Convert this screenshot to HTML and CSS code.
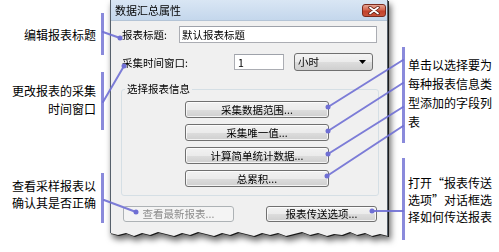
FILE: index.html
```html
<!DOCTYPE html>
<html lang="zh-CN">
<head>
<meta charset="utf-8">
<title>数据汇总属性</title>
<link rel="stylesheet" href="styles.css">
</head>
<body>
<div class="page">
  <div class="left-col">
    <div class="note n1">编辑报表标题</div>
    <div class="note n2">更改报表的采集<br>时间窗口</div>
    <div class="note n3">查看采样报表以<br>确认其是否正确</div>
  </div>

  <div class="dialog-wrap">
    <div class="dialog">
      <div class="titlebar">
        <span class="title">数据汇总属性</span>
        <div class="close">
          <svg width="12" height="9" viewBox="0 0 12 9">
            <path d="M2 1.5 L10 7.5 M10 1.5 L2 7.5" stroke="#5a1a10" stroke-width="3.4" stroke-linecap="round"/>
            <path d="M2 1.5 L10 7.5 M10 1.5 L2 7.5" stroke="#ffffff" stroke-width="1.8" stroke-linecap="round"/>
          </svg>
        </div>
      </div>
      <div class="client">
        <div class="row r1">
          <span class="label l1">报表标题:</span>
          <div class="input wide">默认报表标题</div>
        </div>
        <div class="row r2">
          <span class="label l2">采集时间窗口:</span>
          <div class="input num">1</div>
          <div class="select">
            <span>小时</span>
            <svg width="7" height="4" viewBox="0 0 7 4"><path d="M0 0 H7 L3.5 4 Z" fill="#000"/></svg>
          </div>
        </div>
        <div class="group">
          <span class="legend">选择报表信息</span>
          <button class="btn gbtn">采集数据范围...</button>
          <button class="btn gbtn">采集唯一值...</button>
          <button class="btn gbtn">计算简单统计数据...</button>
          <button class="btn gbtn">总累积...</button>
        </div>
        <div class="bottom-row">
          <button class="btn bbtn disabled" disabled>查看最新报表...</button>
          <button class="btn bbtn right">报表传送选项...</button>
        </div>
      </div>
    </div>
  </div>

  <div class="right-col">
    <div class="note r-1">单击以选择要为<br>每种报表信息类<br>型添加的字段列<br>表</div>
    <div class="note r-2">打开“报表传送<br>选项”对话框选<br>择如何传送报表</div>
  </div>

  <svg class="callouts" width="499" height="252" viewBox="0 0 499 252">
    <g fill="#8484da" opacity="0.95">
      <rect x="101" y="13" width="3" height="42"/>
      <rect x="101" y="72" width="3" height="58"/>
      <rect x="101" y="173" width="3" height="50"/>
      <rect x="402" y="47" width="3" height="96"/>
      <rect x="402" y="158" width="3" height="82"/>
    </g>
    <g stroke="#6f6fd4" stroke-width="2" fill="none" stroke-linecap="round" opacity="0.9">
      <path d="M103 32 L120 38"/>
      <path d="M103 102 L124 66"/>
      <path d="M104 200 L136 212"/>
      <path d="M403 60 L328 107"/>
      <path d="M403 83 L328 131"/>
      <path d="M403 107 L328 154"/>
      <path d="M403 126 L327 176"/>
      <path d="M403 211 L372 211"/>
    </g>
    <g fill="#6f6fd4">
      <circle cx="120" cy="38" r="2.5"/>
      <circle cx="124" cy="66" r="2.5"/>
      <circle cx="136" cy="212" r="2.5"/>
      <circle cx="328" cy="107" r="2.5"/>
      <circle cx="328" cy="131" r="2.5"/>
      <circle cx="328" cy="154" r="2.5"/>
      <circle cx="327" cy="176" r="2.5"/>
      <circle cx="372" cy="211" r="2.5"/>
    </g>
  </svg>
</div>
</body>
</html>
```

FILE: styles.css
```css
* { box-sizing: border-box; }

body {
  margin: 0;
  background: #ffffff;
  font-family: "Noto Sans CJK SC", "Noto Sans", sans-serif;
  color: #000;
}

.page {
  position: relative;
  width: 499px;
  height: 252px;
  display: flex;
  overflow: hidden;
}

/* annotation columns */
.left-col {
  width: 110px;
  flex: none;
  display: flex;
  flex-direction: column;
  align-items: flex-end;
  padding-right: 14px;
  font-size: 12px;
}

.note {
  white-space: nowrap;
}

.left-col .note { text-align: right; }

.n1 { margin-top: 26px; line-height: 17px; }
.n2 { margin-top: 39px; line-height: 18px; }
.n3 { margin-top: 59px; line-height: 17px; }

.right-col {
  flex: 1;
  padding-left: 18px;
  font-size: 12px;
  display: flex;
  flex-direction: column;
}

.r-1 { margin-top: 55px; line-height: 19px; }
.r-2 { margin-top: 43px; line-height: 17px; }

/* dialog */
.dialog-wrap {
  width: 280px;
  flex: none;
  filter: drop-shadow(1px 1px 0 rgba(0, 0, 0, 0.8)) drop-shadow(2px 4px 3px rgba(0, 0, 0, 0.6));
}

.dialog {
  width: 278px;
  height: 240px;
  background: #f0f0f0;
  border-left: 1px solid #56606b;
  border-right: 1px solid #56606b;
  clip-path: polygon(0 0, 278px 0, 278px 236px, 270px 234px, 262px 236px, 255px 233px, 247px 235px, 240px 232px, 232px 235px, 224px 234px, 217px 236px, 208px 233px, 200px 235px, 192px 232px, 184px 234px, 176px 236px, 168px 233px, 160px 235px, 152px 233px, 144px 236px, 136px 234px, 128px 232px, 120px 235px, 112px 233px, 104px 236px, 96px 234px, 88px 232px, 80px 235px, 72px 233px, 64px 236px, 56px 234px, 48px 232px, 40px 235px, 32px 233px, 24px 236px, 16px 233px, 8px 235px, 0 233px);
  font-size: 10.5px;
}

.titlebar {
  height: 21px;
  display: flex;
  align-items: center;
  justify-content: space-between;
  padding: 0 1px 0 4px;
  background: linear-gradient(#d9e6f4, #c4d7ec);
  border-bottom: 1px solid #b4c4d6;
}

.title {
  font-size: 11px;
  line-height: 14px;
  color: #000;
}

.close {
  width: 24px;
  height: 13px;
  border: 1px solid #7a2a1e;
  border-radius: 3px;
  background: linear-gradient(#e6a593 0%, #d4654f 45%, #c2412b 55%, #c9543c 100%);
  display: flex;
  align-items: center;
  justify-content: center;
}

.client {
  display: flex;
  flex-direction: column;
}

.row {
  display: flex;
  align-items: center;
}

.r1 { margin-top: 5px; height: 17px; }
.r2 { margin-top: 10px; height: 18px; }

.label {
  margin-left: 11px;
  line-height: 17px;
  white-space: nowrap;
}

.l1 { width: 57px; }
.l2 { width: 112px; }

.input {
  background: #ffffff;
  border: 1px solid #abadb3;
  border-top-color: #9ea2aa;
  line-height: 15px;
  padding-left: 2px;
  white-space: nowrap;
}

.wide { width: 198px; height: 17px; }
.num { width: 50px; height: 16px; padding-left: 3px; }

.select {
  margin-left: 10px;
  width: 79px;
  height: 18px;
  border: 1px solid #707070;
  border-radius: 3px;
  background: linear-gradient(#f4f4f4 0%, #ebebeb 50%, #dddddd 51%, #cfcfcf 100%);
  display: flex;
  align-items: center;
  justify-content: space-between;
  padding: 0 6px 0 3px;
  line-height: 16px;
}

.group {
  position: relative;
  margin-top: 18px;
  margin-left: 10px;
  width: 258px;
  height: 107px;
  border: 1px solid #d5dfe5;
  border-radius: 3px;
  padding-top: 11px;
  display: flex;
  flex-direction: column;
  gap: 6px;
}

.legend {
  position: absolute;
  top: -8px;
  left: 3px;
  padding: 0 2px;
  background: #f0f0f0;
  line-height: 14px;
}

.btn {
  font-family: inherit;
  font-size: 10.5px;
  color: #000;
  padding: 0;
  margin: 0;
  border: 1px solid #707070;
  border-radius: 3px;
  background: linear-gradient(#f2f2f2 0%, #ebebeb 50%, #dddddd 51%, #cfcfcf 100%);
  box-shadow: inset 0 0 0 1px rgba(255, 255, 255, 0.75);
  line-height: 14px;
  white-space: nowrap;
}

.gbtn {
  margin-left: 63px;
  width: 144px;
  height: 17px;
}

.bottom-row {
  margin-top: 10px;
  display: flex;
}

.bbtn {
  width: 111px;
  height: 16px;
}

.bbtn.disabled {
  margin-left: 12px;
  color: #8d8d8d;
  border-color: #adb2b5;
  background: #f4f4f4;
  box-shadow: none;
}

.bbtn.right {
  margin-left: 32px;
}

.callouts {
  position: absolute;
  left: 0;
  top: 0;
  pointer-events: none;
}
```
